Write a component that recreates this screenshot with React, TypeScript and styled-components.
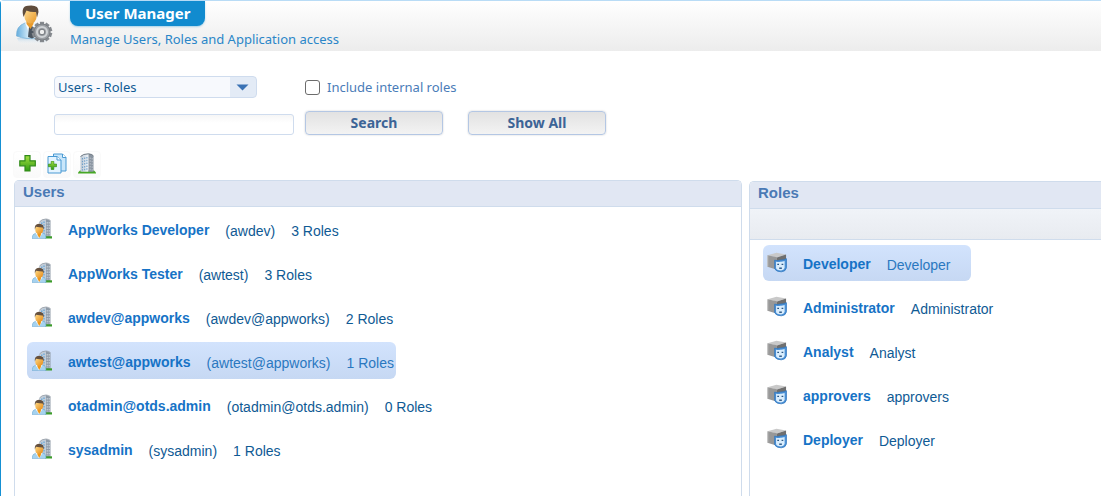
import React from 'react';
import styled, { createGlobalStyle } from 'styled-components';

const Global = createGlobalStyle`
  *, *::before, *::after { box-sizing: border-box; }
  body { margin: 0; background: #fff; font-family: "Liberation Sans", Arial, sans-serif; font-size: 14px; }
`;

const Page = styled.div`
  min-height: 100vh;
  display: flex;
  flex-direction: column;
  border-left: 1px solid #1590d3;
  border-top: 1px solid #b9dcf6;
  border-top-left-radius: 4px;
`;

const Header = styled.header`
  display: flex;
  height: 50px;
  padding-left: 13px;
  gap: 14px;
  background: linear-gradient(#ffffff, #ececec);
`;

const HeaderText = styled.div`
  display: flex;
  flex-direction: column;
  align-items: flex-start;
  gap: 4px;
`;

const Title = styled.h1`
  margin: 0;
  padding: 0 15px;
  border-radius: 0 0 8px 8px;
  background: #118bcf;
  color: #fff;
  font: bold 15px/25px "Noto Sans", Tahoma, sans-serif;
  box-shadow: 0 1px 2px rgba(17, 139, 207, 0.35);
`;

const Subtitle = styled.p`
  margin: 0;
  color: #2a86c8;
  font: 13px/18px "Noto Sans", Verdana, sans-serif;
`;

const Filters = styled.form`
  display: grid;
  grid-template-columns: 240px 138px 138px;
  column-gap: 11px;
  row-gap: 13px;
  align-items: center;
  padding: 25px 0 0 53px;
  font-family: "Noto Sans", Tahoma, sans-serif;
`;

const SelectBox = styled.div`
  display: grid;
  width: 203px;
  height: 22px;
  border: 1px solid #cfdcee;
  border-radius: 4px;
  background: linear-gradient(to right, #f7f9fd 175px, #e3ebf6 175px);
  align-items: center;

  > * { grid-area: 1 / 1; }
  > svg { justify-self: end; margin-right: 7px; pointer-events: none; }
`;

const Select = styled.select`
  appearance: none;
  width: 100%;
  height: 20px;
  padding: 0 3px;
  border: 0;
  background: transparent;
  color: #0f5a94;
  font: 13px/20px "Noto Sans", Tahoma, sans-serif;
`;

const Check = styled.label`
  grid-column: span 2;
  display: flex;
  align-items: center;
  gap: 7px;
  color: #4a7cb8;
  font-size: 13px;
  line-height: 20px;
  white-space: nowrap;

  input {
    appearance: none;
    width: 15px;
    height: 15px;
    margin: 0;
    border: 1px solid #6c6c6c;
    border-radius: 3px;
    background: #fff;
  }
  input:checked { background: #4a7cb8; }
`;

const SearchInput = styled.input`
  width: 100%;
  height: 21px;
  margin-top: 3px;
  border: 1px solid #cfdcee;
  border-radius: 3px;
  background: linear-gradient(#f6f6f6, #fff 8px);
`;

const Button = styled.button<{ $apart?: boolean }>`
  width: 138px;
  height: 24px;
  padding: 0;
  margin-left: ${(p) => (p.$apart ? '14px' : '0')};
  border: 1px solid #b4c7e4;
  border-radius: 4px;
  background: linear-gradient(#e2e2e2, #f3f3f3);
  box-shadow: 0 0 2px rgba(0, 0, 0, 0.2);
  color: #3c6496;
  font: bold 14px/22px "Noto Sans", Tahoma, sans-serif;
`;

const Toolbar = styled.div`
  display: flex;
  gap: 2px;
  padding: 16px 0 2px 12px;
`;

const ToolButton = styled.button`
  display: grid;
  place-items: center;
  width: 28px;
  height: 27px;
  padding: 0 0 2px;
  border: 1px solid #fafafa;
  border-radius: 4px;
  background: linear-gradient(#fff, #fafafa);
`;

const Panels = styled.main`
  flex: 1;
  display: grid;
  grid-template-columns: 728px minmax(0, 1fr);
  gap: 7px;
  padding-left: 13px;
`;

const Panel = styled.section<{ $low?: boolean }>`
  margin-top: ${(p) => (p.$low ? '1px' : '0')};
  border: 1px solid #cfdcec;
  border-width: ${(p) => (p.$low ? '1px 0 0 1px' : '1px 1px 0')};
  border-radius: ${(p) => (p.$low ? '5px 0 0 0' : '5px 5px 0 0')};
  overflow: hidden;
`;

const PanelTitle = styled.h2<{ $tall?: boolean }>`
  margin: 0;
  padding: 0 8px;
  height: ${(p) => (p.$tall ? '27px' : '26px')};
  border-bottom: 1px solid #cfdcec;
  background: #e1e7f3;
  color: #4a7ab5;
  font-size: 15px;
  font-weight: bold;
  line-height: 22px;
`;

const PanelBar = styled.div`
  height: 31px;
  border-bottom: 1px solid #cfdcec;
  background: linear-gradient(#f0f3f8, #e8ebf0);
`;

const List = styled.ul<{ $roles?: boolean }>`
  list-style: none;
  margin: 0;
  padding: ${(p) => (p.$roles ? '5px 13px' : '3px 12px')};
  display: flex;
  flex-direction: column;
  align-items: flex-start;
  gap: ${(p) => (p.$roles ? '8px' : '7px')};
`;

const Row = styled.li<{ $selected?: boolean; $role?: boolean }>`
  display: flex;
  align-items: flex-start;
  gap: 16px;
  height: ${(p) => (p.$role ? '36px' : '37px')};
  padding: ${(p) => (p.$role ? '7px 20px 0 4px' : '8px 2px 0 5px')};
  border-radius: 6px;
  background: ${(p) => (p.$selected ? 'linear-gradient(#d2e3fd, #c6d8f3)' : 'none')};
  color: ${(p) => (p.$selected ? '#2a78c0' : '#0f5a94')};
  white-space: nowrap;

  > svg { flex: none; }
`;

const Name = styled.strong`
  color: #1673c6;
  font-size: 14px;
  line-height: 24px;
`;

const Detail = styled.span`
  line-height: 26px;
`;

const Gradients = () => (
  <defs>
    <linearGradient id="towerFront"><stop stopColor="#bac6d2" /><stop offset="1" stopColor="#f0f5fa" /></linearGradient>
    <linearGradient id="leaf" x2="0" y2="1"><stop stopColor="#a5df42" /><stop offset="1" stopColor="#2f9a12" /></linearGradient>
    <linearGradient id="skin" x2="1" y2="1"><stop stopColor="#ffdd8a" /><stop offset="1" stopColor="#e58a18" /></linearGradient>
  </defs>
);

const UserIcon = () => (
  <svg width="20" height="22" viewBox="0 -1 20 22" aria-hidden="true">
    <Gradients />
    <path d="M7 3.500Q9 0 14 0v18.500H8z" fill="#c2ccd7" />
    <path d="M14 0 18.500 1.700v17H14z" fill="#8f9ba8" />
    <path d="M7.500 3Q9.500 0 14 0q3 .2 4.500 1.700" fill="none" stroke="#949ca5" strokeWidth=".8" />
    <path d="M9.800 3.500v3M12 2.500v13" stroke="#5fa5da" strokeWidth="1.200" strokeDasharray="1.500 1.300" />
    <path d="M15.200 3v14M17.200 3v14" stroke="#d3dae2" strokeDasharray="1.600 1.100" />
    <path d="M13 17.300h7v2.200h-7z" fill="#3b9b2a" />
    <path d="M0 19.500Q0 14.800 4 14h6.500q3.500.7 3.500 5.500z" fill="#a5d2ef" stroke="#6aa6cf" strokeWidth=".5" />
    <path d="M3.500 14 7 19.500l3.500-5.500z" fill="#f4fbff" />
    <path d="M5.200 13h4l-.3 3-1.600 3-1.800-3z" fill="#ef9718" />
    <ellipse cx="7.200" cy="10.500" rx="4" ry="4.200" fill="url(#skin)" />
    <path d="M2.800 10.500Q2.200 5 7 4.800q5.600 0 4.700 6l-1-2.300Q7.500 8.500 4 7.800z" fill="#65503e" />
  </svg>
);

const RoleIcon = () => (
  <svg width="20" height="21" viewBox="0 0 21 22" aria-hidden="true">
    <path d="M.5 3.500 10 .8l10 1.700-9.500 3.200z" fill="#c9c9c9" />
    <path d="M.5 3.500 10.500 5.500v13L.5 15.500z" fill="#989898" />
    <path d="M10.500 5.700 20 2.500v12l-9.500 4z" fill="#6f6f6f" />
    <path d="M.8 4v11.300" stroke="#c4c4c4" />
    <path d="M8 8.500q3 1 5.500 0Q17 8.500 20.500 7v9.500q-.8 4-5.500 4.300-5.500 0-7-3.300z" fill="#4a90d6" stroke="#2f74bb" strokeWidth=".7" />
    <path d="M9.500 10.200q2.200.5 4.500 0 2 .2 4.500-.7v7.300q-.8 2.500-3.800 2.500-4 0-5.200-2.300z" fill="#d9edfd" />
    <path d="M10.800 13h1.800M15.300 13h1.800" stroke="#2b5683" strokeWidth="1.300" />
    <path d="M12.800 17h2.800" stroke="#2b5683" strokeWidth="1.500" />
  </svg>
);

const Cross = () => (
  <path d="M6 .7h5v5.100h5.300v5H11V16H6v-5.200H.8v-5H6z" fill="url(#leaf)" stroke="#308a19" strokeWidth="1.200" />
);

const PlusIcon = () => (
  <svg width="17" height="17" viewBox="0 0 17 17" aria-hidden="true"><Gradients /><Cross /></svg>
);

const CopyIcon = () => (
  <svg width="20" height="21" viewBox="0 0 20 21" aria-hidden="true">
    <Gradients />
    <path d="M6.500 1h9L19 4.500V18H6.500z" fill="#c9e6fa" stroke="#4a9ad3" />
    <path d="M15.500 1v3.500H19" fill="#fff" stroke="#4a9ad3" />
    <path d="M1 3.500h9L14 7v13H1z" fill="#e4f4ff" stroke="#4a9ad3" />
    <path d="M10 3.500V7h4" fill="#fff" stroke="#4a9ad3" />
    <svg x="1" y="8" width="9" height="9" viewBox="0 0 17 17"><Cross /></svg>
  </svg>
);

const BuildingIcon = () => (
  <svg width="20" height="21" viewBox="0 0 20 21" aria-hidden="true">
    <Gradients />
    <path d="M1 19.500 3 17.500h14l2 2v1H1z" fill="#46a724" />
    <path d="M3.500 3.500Q6 .8 11.500.8v18H3.500z" fill="url(#towerFront)" />
    <path d="M11.500.8q4 .4 5 2.200v15.800h-5z" fill="#8a95a1" />
    <path d="M3.500 3.500Q6 .8 11.500.8q4 .4 5 2.200" fill="none" stroke="#6f7983" />
    <path d="M5.500 5v12.500M7.700 4.500v13M9.900 4v13.500" stroke="#6f9fc8" strokeWidth="1.100" strokeDasharray="1.500 1.300" />
    <path d="M13.200 4.500v13M15.200 5v12.500" stroke="#c5cdd6" strokeWidth=".8" strokeDasharray="1.500 1.300" />
  </svg>
);

const GearTeeth = () => (
  <>
    {[0, 36, 72, 108, 144, 180, 216, 252, 288, 324].map((a) => (
      <rect key={a} x="25.900" y="20.800" width="4.200" height="5" fill="#85898e" transform={`rotate(${a} 28 31)`} />
    ))}
  </>
);

const ManagerIcon = () => (
  <svg width="42" height="46" viewBox="0 0 42 46" aria-hidden="true">
    <defs>
      <linearGradient id="shirt" x2="1"><stop stopColor="#65addd" /><stop offset=".6" stopColor="#e4f4fc" /></linearGradient>
      <linearGradient id="face" x2="1" y2="1"><stop stopColor="#ffe099" /><stop offset="1" stopColor="#e89727" /></linearGradient>
      <linearGradient id="fade" x2="0" y2="1"><stop stopColor="#a9cfe8" stopOpacity=".6" /><stop offset="1" stopColor="#fff" stopOpacity="0" /></linearGradient>
    </defs>
    <path d="M3 37h31l-4 7H6z" fill="url(#fade)" />
    <path d="M2.500 35Q2 25 11 22h9q6 3 6 15-14 2-23.500-2z" fill="url(#shirt)" stroke="#72aed5" strokeWidth=".7" />
    <path d="M11 21.500 17 37l4-15z" fill="#f8fcff" />
    <path d="m15 26 2-2 2 2 2 10-3 1.500-4-1.500z" fill="#4b5560" />
    <path d="M12.500 18h7v5L16.500 28l-4-5z" fill="#e99b2c" />
    <ellipse cx="16.500" cy="14.500" rx="6.200" ry="8" fill="url(#face)" />
    <path d="M9.500 16Q6.500 5 14 4.800q11-1.500 10.500 6.200L23 16.500l-1-5.500q-5 .5-9.500-1.500z" fill="#5f4c3c" />
    <GearTeeth />
    <circle cx="28" cy="31" r="8" fill="#9a9ea3" stroke="#7b7f84" />
    <circle cx="28" cy="31" r="5" fill="none" stroke="#cfd2d5" strokeWidth="2" />
    <circle cx="28" cy="31" r="2.800" fill="#eee" stroke="#74787d" />
  </svg>
);

const users = [
  { name: 'AppWorks Developer', id: 'awdev', roles: 3 },
  { name: 'AppWorks Tester', id: 'awtest', roles: 3 },
  { name: 'awdev@appworks', id: 'awdev@appworks', roles: 2 },
  { name: 'awtest@appworks', id: 'awtest@appworks', roles: 1, selected: true },
  { name: 'otadmin@otds.admin', id: 'otadmin@otds.admin', roles: 0 },
  { name: 'sysadmin', id: 'sysadmin', roles: 1 },
];

const roles = ['Developer', 'Administrator', 'Analyst', 'approvers', 'Deployer'];

export default function App() {
  return (
    <Page>
      <Global />
      <Header>
        <ManagerIcon />
        <HeaderText>
          <Title>User Manager</Title>
          <Subtitle>Manage Users, Roles and Application access</Subtitle>
        </HeaderText>
      </Header>
      <Filters onSubmit={(e) => e.preventDefault()}>
        <SelectBox>
          <Select aria-label="View" defaultValue="ur">
            <option value="ur">Users - Roles</option>
          </Select>
          <svg width="13" height="7" viewBox="0 0 13 7" aria-hidden="true">
            <path d="M.5.500h12L6.500 6.500z" fill="#3a72b4" />
          </svg>
        </SelectBox>
        <Check>
          <input type="checkbox" />
          Include internal roles
        </Check>
        <SearchInput type="text" aria-label="Search users" />
        <Button type="submit">Search</Button>
        <Button type="button" $apart>Show All</Button>
      </Filters>
      <Toolbar>
        <ToolButton type="button" aria-label="Add user"><PlusIcon /></ToolButton>
        <ToolButton type="button" aria-label="Duplicate user"><CopyIcon /></ToolButton>
        <ToolButton type="button" aria-label="Organization"><BuildingIcon /></ToolButton>
      </Toolbar>
      <Panels>
        <Panel>
          <PanelTitle>Users</PanelTitle>
          <List>
            {users.map((u) => (
              <Row key={u.name} $selected={u.selected}>
                <UserIcon />
                <Name>{u.name}</Name>
                <Detail>({u.id})</Detail>
                <Detail>{u.roles} Roles</Detail>
              </Row>
            ))}
          </List>
        </Panel>
        <Panel $low>
          <PanelTitle $tall>Roles</PanelTitle>
          <PanelBar />
          <List $roles>
            {roles.map((r, i) => (
              <Row key={r} $selected={i === 0} $role>
                <RoleIcon />
                <Name>{r}</Name>
                <Detail>{r}</Detail>
              </Row>
            ))}
          </List>
        </Panel>
      </Panels>
    </Page>
  );
}
